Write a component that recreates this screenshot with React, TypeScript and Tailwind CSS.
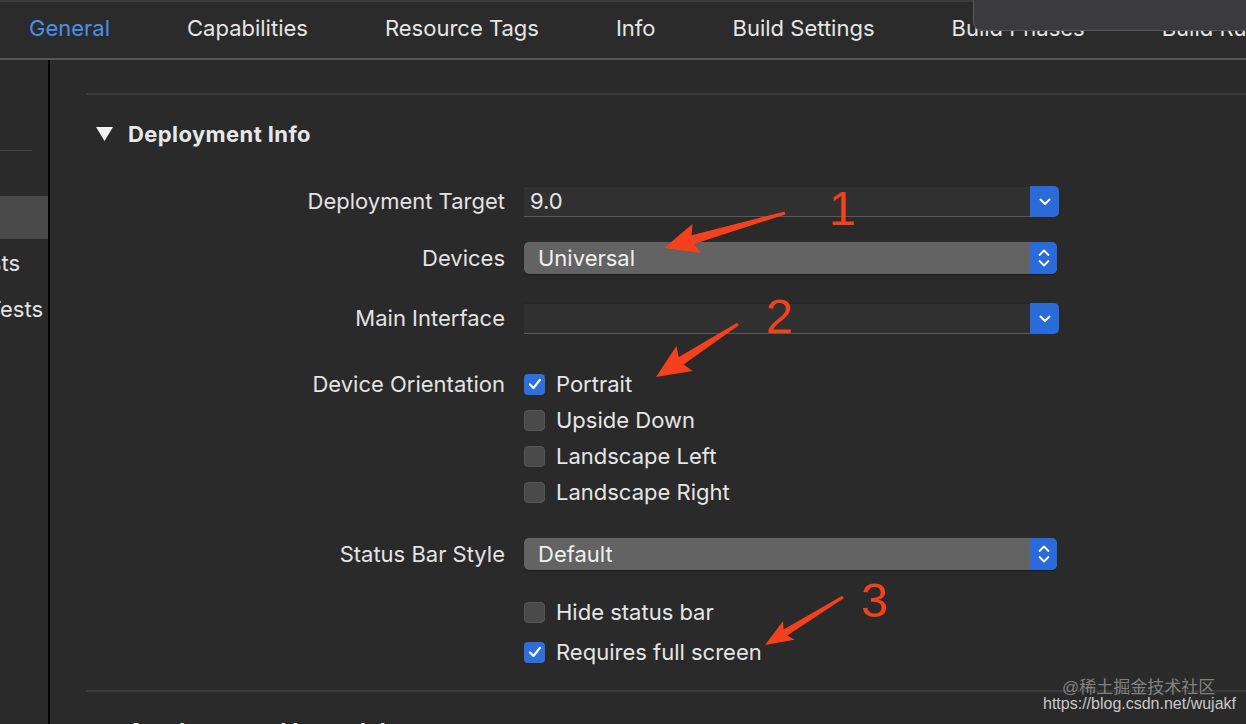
import React from 'react';

const font = { fontFamily: 'Inter, "Noto Sans", sans-serif' };

type Pt = [number, number];

const arrowPoints = (tail: Pt, tip: Pt, headLen: number, headHalf: number, tailW: number, neckW: number) => {
  const dx = tip[0] - tail[0];
  const dy = tip[1] - tail[1];
  const len = Math.hypot(dx, dy);
  const ux = dx / len;
  const uy = dy / len;
  const nx = -uy;
  const ny = ux;
  const bx = tip[0] - ux * headLen;
  const by = tip[1] - uy * headLen;
  const pts: Pt[] = [
    [tail[0] + (nx * tailW) / 2, tail[1] + (ny * tailW) / 2],
    [bx + (nx * neckW) / 2, by + (ny * neckW) / 2],
    [bx - ux * 4 + nx * headHalf, by - uy * 4 + ny * headHalf],
    tip,
    [bx - ux * 4 - nx * headHalf, by - uy * 4 - ny * headHalf],
    [bx - (nx * neckW) / 2, by - (ny * neckW) / 2],
    [tail[0] - (nx * tailW) / 2, tail[1] - (ny * tailW) / 2],
  ];
  return pts.map((p) => `${p[0].toFixed(1)},${p[1].toFixed(1)}`).join(' ');
};

const ChevronDown = () => (
  <svg width="12" height="8" viewBox="0 0 12 8" fill="none">
    <path d="M1.5 1.5 L6 6 L10.5 1.5" stroke="white" strokeWidth="2" strokeLinecap="round" strokeLinejoin="round" />
  </svg>
);

const Stepper = () => (
  <svg width="12" height="20" viewBox="0 0 12 20" fill="none">
    <path d="M1.5 7 L6 2.5 L10.5 7" stroke="white" strokeWidth="1.8" strokeLinecap="round" strokeLinejoin="round" />
    <path d="M1.5 13 L6 17.5 L10.5 13" stroke="white" strokeWidth="1.8" strokeLinecap="round" strokeLinejoin="round" />
  </svg>
);

const ComboBox: React.FC<{ value?: string }> = ({ value }) => (
  <div className="flex h-[31px] w-[535px]">
    <div className="flex-1 flex items-center pl-[6px] bg-[#313131] border-t border-t-[#262626] border-b border-b-[#595959] text-[22px] text-[#e6e6e6]">
      {value}
    </div>
    <div className="w-[29px] bg-[#2a6bd9] rounded-r-[5px] flex items-center justify-center">
      <ChevronDown />
    </div>
  </div>
);

const PopUp: React.FC<{ value: string }> = ({ value }) => (
  <div className="flex h-[32px] w-[533px] rounded-[5px] overflow-hidden shadow-[0_1px_1px_rgba(0,0,0,0.4)]">
    <div className="flex-1 flex items-center pl-[14px] bg-[#636363] text-[22px] text-[#f0f0f0]">{value}</div>
    <div className="w-[27px] bg-[#2a6bd9] flex items-center justify-center">
      <Stepper />
    </div>
  </div>
);

const Check: React.FC<{ on?: boolean; label: string }> = ({ on, label }) => (
  <div className="flex items-center h-full">
    {on ? (
      <div className="w-[21px] h-[21px] rounded-[4px] bg-[#2f6fdc] flex items-center justify-center">
        <svg width="14" height="12" viewBox="0 0 14 12" fill="none">
          <path d="M2 6.5 L5.5 10 L12 1.8" stroke="white" strokeWidth="2.2" strokeLinecap="round" strokeLinejoin="round" />
        </svg>
      </div>
    ) : (
      <div className="w-[21px] h-[21px] rounded-[4px] bg-[#4a4a4a] border border-[#555]" />
    )}
    <span className="ml-[11px] text-[22px] text-[#e6e6e6]">{label}</span>
  </div>
);

const Row: React.FC<{ label?: string; className?: string; children?: React.ReactNode }> = ({ label, className, children }) => (
  <div className={`flex items-center ${className ?? ''}`}>
    <div className="w-[419px] text-right text-[22px] text-[#e3e3e3] whitespace-nowrap">{label}</div>
    <div className="ml-[19px] h-full flex items-center">{children}</div>
  </div>
);

const SectionHeader: React.FC<{ title: string }> = ({ title }) => (
  <div className="h-[78px] flex items-center pl-[10px]">
    <svg width="17" height="14" viewBox="0 0 17 14">
      <polygon points="0,0 17,0 8.5,14" fill="#f2f2f2" />
    </svg>
    <span className="ml-[15px] text-[22px] font-bold tracking-[0.4px] text-[#e8e8e8]">{title}</span>
  </div>
);

const tabs = ['General', 'Capabilities', 'Resource Tags', 'Info', 'Build Settings', 'Build Phases', 'Build Rules'];

export default function App() {
  return (
    <div className="relative w-[1246px] h-[724px] overflow-hidden bg-[#2a2a2a] flex flex-col" style={font}>
      {/* tab bar */}
      <div className="h-[60px] shrink-0 bg-[#2b2b2b] border-t-2 border-t-[#3c3c3c] border-b-2 border-b-[#555] flex items-center pl-[29px] pb-[3px] gap-[77px] whitespace-nowrap">
        {tabs.map((t, i) => (
          <span key={t} className={`text-[22px] ${i === 0 ? 'text-[#4a90e8]' : 'text-[#e6e6e6]'}`}>
            {t}
          </span>
        ))}
      </div>

      {/* popover at top right */}
      <div className="absolute top-0 left-[973px] w-[290px] h-[31px] bg-[#3b3a3d] border border-t-0 border-[#5a5a5c] rounded-bl-[9px]" />

      <div className="flex flex-1 min-h-0">
        {/* sidebar */}
        <div className="w-[50px] shrink-0 border-r-2 border-r-black bg-[#2a2a2a] pt-[90px]">
          <div className="w-[32px] h-px bg-[#444]" />
          <div className="mt-[45px] h-[43px] bg-[#4a4a4a]" />
          <div className="h-[48px] flex items-center">
            <div className="w-[20px] overflow-hidden flex justify-end whitespace-nowrap text-[22px] text-[#e3e3e3]">DemoTests</div>
          </div>
          <div className="h-[44px] flex items-center">
            <div className="w-[43px] overflow-hidden flex justify-end whitespace-nowrap text-[22px] text-[#e3e3e3]">DemoUITests</div>
          </div>
        </div>

        {/* main */}
        <div className="flex-1 pl-[36px] pt-[33px]">
          <div className="border-t-2 border-t-[#3a3a3a]">
            <SectionHeader title="Deployment Info" />
            <Row label="Deployment Target" className="mt-[13px] h-[31px]">
              <ComboBox value="9.0" />
            </Row>
            <Row label="Devices" className="mt-[25px] h-[32px]">
              <PopUp value="Universal" />
            </Row>
            <Row label="Main Interface" className="mt-[29px] h-[31px]">
              <ComboBox />
            </Row>
            <Row label="Device Orientation" className="mt-[32px] h-[36px]">
              <Check on label="Portrait" />
            </Row>
            <Row className="h-[36px]">
              <Check label="Upside Down" />
            </Row>
            <Row className="h-[36px]">
              <Check label="Landscape Left" />
            </Row>
            <Row className="h-[36px]">
              <Check label="Landscape Right" />
            </Row>
            <Row label="Status Bar Style" className="mt-[28px] h-[32px]">
              <PopUp value="Default" />
            </Row>
            <Row className="mt-[22px] h-[40px]">
              <Check label="Hide status bar" />
            </Row>
            <Row className="h-[40px]">
              <Check on label="Requires full screen" />
            </Row>
          </div>
          <div className="mt-[18px] border-t-2 border-t-[#3a3a3a]">
            <SectionHeader title="App Icons and Launch Images" />
          </div>
        </div>
      </div>

      {/* annotations */}
      <svg className="absolute inset-0 pointer-events-none" width="1246" height="724">
        <polygon points={arrowPoints([785, 213], [664, 248], 30, 15, 3, 9)} fill="#f3401d" />
        <polygon points={arrowPoints([738, 324], [656, 377], 30, 15, 3, 9)} fill="#f3401d" />
        <polygon points={arrowPoints([843, 597], [765, 645], 24, 11, 3, 7)} fill="#f3401d" />
      </svg>
      <span className="absolute left-[829px] top-[184px] text-[49px] leading-none text-[#f3401d]" style={{ fontFamily: '"Liberation Sans", Arial, sans-serif' }}>1</span>
      <span className="absolute left-[766px] top-[292px] text-[49px] leading-none text-[#f3401d]" style={{ fontFamily: '"Liberation Sans", Arial, sans-serif' }}>2</span>
      <span className="absolute left-[861px] top-[576px] text-[49px] leading-none text-[#f3401d]" style={{ fontFamily: '"Liberation Sans", Arial, sans-serif' }}>3</span>

      {/* watermark */}
      <div className="absolute left-[1062px] top-[679px] text-[17px] leading-none text-[#9a9a9a]/80" style={{ fontFamily: '"Liberation Sans", "Noto Sans CJK SC", sans-serif' }}>
        @稀土掘金技术社区
      </div>
      <div className="absolute left-[1043px] top-[696px] text-[16px] leading-none text-[#c8c8c8]" style={{ fontFamily: '"Liberation Sans", "Noto Sans CJK SC", sans-serif' }}>
        https://blog.csdn.net/wujakf
      </div>
    </div>
  );
}
